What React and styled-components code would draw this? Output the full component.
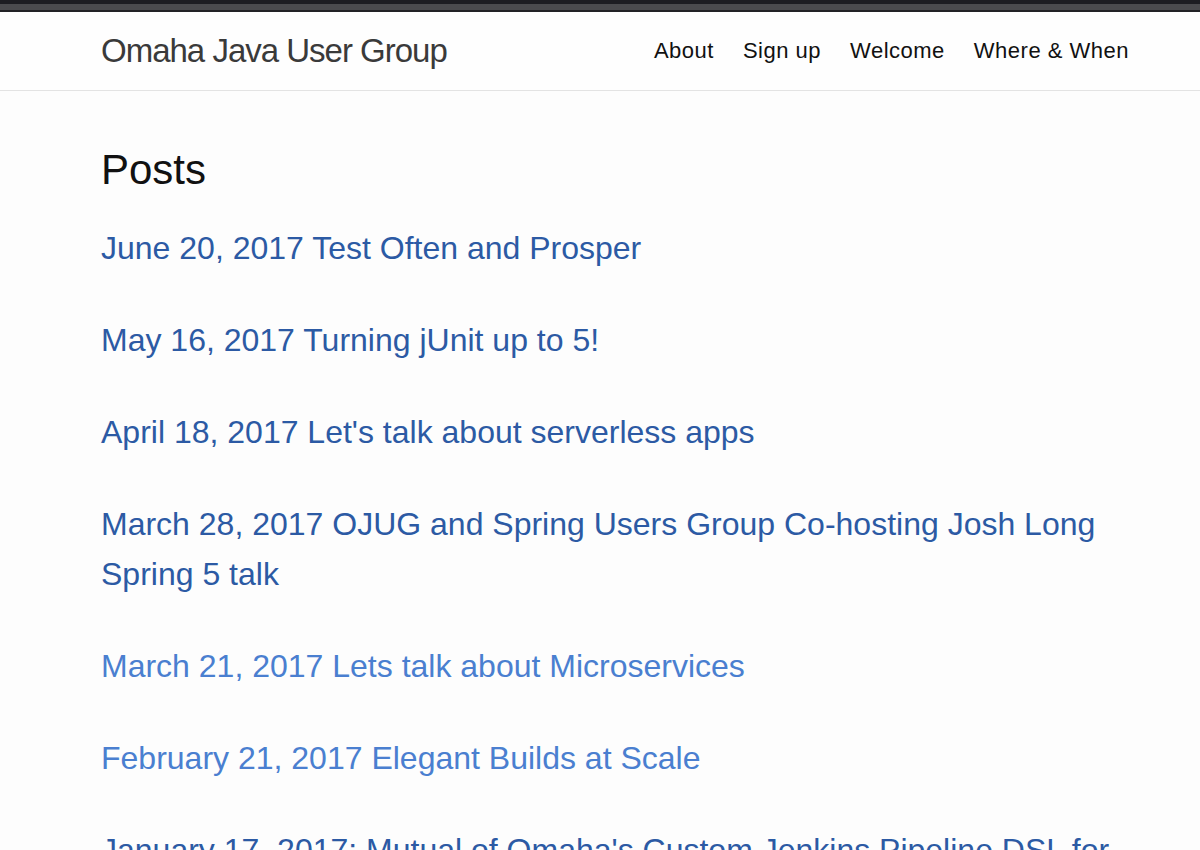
import styled, { createGlobalStyle } from 'styled-components'

const GlobalStyle = createGlobalStyle`
  html, body {
    margin: 0;
    padding: 0;
    background: #fdfdfd;
    font-family: "Liberation Sans", Arial, sans-serif;
  }
`

const WindowEdge = styled.div`
  height: 12px;
  background: linear-gradient(
    to bottom,
    #1c1c22 0px,
    #1c1c22 4px,
    #4a4a4e 4px,
    #4a4a4e 10px,
    #222226 10px,
    #222226 12px
  );
`

const Header = styled.header`
  height: 78px;
  background: #fefefe;
  border-bottom: 1px solid #e3e3e3;
  display: flex;
  align-items: center;
  justify-content: space-between;
  padding: 0 71px 0 101px;
`

const SiteTitle = styled.a`
  font-size: 33px;
  font-weight: 300;
  letter-spacing: -1px;
  color: #3a3a3a;
  text-decoration: none;
`

const Nav = styled.nav`
  display: flex;
  gap: 29px;
`

const NavLink = styled.a`
  font-size: 22px;
  letter-spacing: 0.5px;
  color: #111;
  text-decoration: none;
`

const Main = styled.main`
  padding: 54px 71px 0 101px;
`

const Heading = styled.h1`
  margin: 0 0 28px;
  font-size: 42px;
  font-weight: 400;
  line-height: 50px;
  color: #111;
`

const PostList = styled.ul`
  list-style: none;
  margin: 0;
  padding: 0;
  display: flex;
  flex-direction: column;
  gap: 42px;
`

const PostLink = styled.a`
  display: block;
  font-size: 32px;
  line-height: 50px;
  text-decoration: none;
  color: ${(p) => (p.$visited ? '#2c5aa4' : '#4a7fd0')};
`

const posts = [
  { title: 'June 20, 2017 Test Often and Prosper', visited: true },
  { title: 'May 16, 2017 Turning jUnit up to 5!', visited: true },
  { title: "April 18, 2017 Let's talk about serverless apps", visited: true },
  {
    title: 'March 28, 2017 OJUG and Spring Users Group Co-hosting Josh Long Spring 5 talk',
    visited: true,
  },
  { title: 'March 21, 2017 Lets talk about Microservices', visited: false },
  { title: 'February 21, 2017 Elegant Builds at Scale', visited: false },
  {
    title: "January 17, 2017: Mutual of Omaha's Custom Jenkins Pipeline DSL for Continuous Delivery",
    visited: true,
  },
]

export default function App() {
  return (
    <>
      <GlobalStyle />
      <WindowEdge />
      <Header>
        <SiteTitle href="#">Omaha Java User Group</SiteTitle>
        <Nav>
          <NavLink href="#">About</NavLink>
          <NavLink href="#">Sign up</NavLink>
          <NavLink href="#">Welcome</NavLink>
          <NavLink href="#">Where &amp; When</NavLink>
        </Nav>
      </Header>
      <Main>
        <Heading>Posts</Heading>
        <PostList>
          {posts.map((post) => (
            <li key={post.title}>
              <PostLink href="#" $visited={post.visited}>
                {post.title}
              </PostLink>
            </li>
          ))}
        </PostList>
      </Main>
    </>
  )
}
